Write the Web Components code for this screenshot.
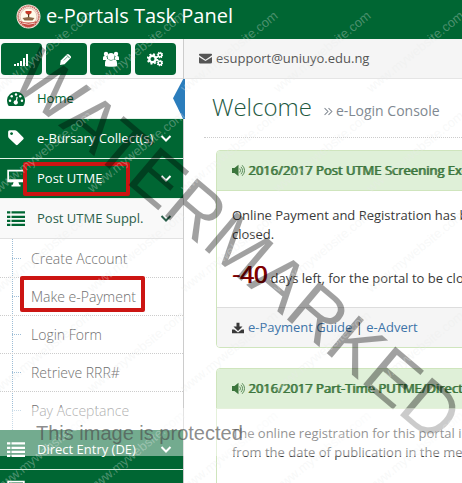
<!DOCTYPE html>
<html lang="en">
<head>
<meta charset="utf-8">
<title>e-Portals Task Panel</title>
<style>
:root{--green:#006633;--line:#e2e2e2}
html,body{margin:0;height:100%;overflow:hidden;background:#fff}
body{font:13px/19px "Open Sans","Noto Sans",sans-serif;color:#393939}
</style>
</head>
<body>
<portal-app></portal-app>
<script>
const ICONS={
signal:'<g fill="currentColor" stroke="none"><path d="M0 13h2v2H0zM3 12h2v3H3zM6 10h2v5H6zM9 7h2v8H9zM12 3h2v12h-2z"/></g>',
pencil:'<path d="M0 16l1-6 8-8c1-1 2-1 3 0l2 2c1 1 1 2 0 3l-8 8z" fill="currentColor"/><path d="M9 3l4 4" stroke="var(--green)"/><path d="M5 10l5-5" stroke="var(--green)" stroke-width=".7"/>',
users:'<g fill="currentColor"><circle cx="8" cy="5.500" r="3.500"/><circle cx="3" cy="3" r="2.200"/><circle cx="13" cy="3" r="2.200"/><path d="M0 9V7c0-2 1-2 3-2 1 0 1 3 2 4zM16 9V7c0-2-1-2-3-2-1 0-1 3-2 4zM2 15v-3c0-3 2-4 3-4 2 2 4 2 6 0 1 0 3 1 3 4v3c0 1-12 1-12 0z"/></g>',
cogs:'<g fill="none" stroke="currentColor"><circle cx="5.500" cy="8" r="3.200" stroke-width="2.400"/><circle cx="5.500" cy="8" r="4.700" stroke-width="2" stroke-dasharray="1.850 1.850"/><circle cx="13" cy="4" r="1.800" stroke-width="1.500"/><circle cx="13" cy="4" r="2.700" stroke-width="1.200" stroke-dasharray="1.060 1.060"/><circle cx="13" cy="12" r="1.800" stroke-width="1.500"/><circle cx="13" cy="12" r="2.700" stroke-width="1.200" stroke-dasharray="1.060 1.060"/></g>',
gauge:'<path d="M1.500 15A8 8 0 1 1 14.500 15Z" fill="currentColor"/><g fill="#fff"><circle cx="2.700" cy="10.500" r="1.100"/><circle cx="4.200" cy="6.500" r="1.100"/><circle cx="8" cy="4.800" r="1.100"/><circle cx="11.800" cy="6.500" r="1.100"/><circle cx="13.300" cy="10.500" r="1.100"/><circle cx="7.800" cy="12" r="1.900"/></g><path d="M8 12l1-5" stroke="#fff" stroke-width="1.100"/>',
tag:'<path fill="currentColor" fill-rule="evenodd" d="M1 2.500Q1 1 2.500 1H7q1 0 2 1l5.500 5.500q.8.800 0 1.600l-5 5q-.8.800-1.600 0L2 8.500Q1 7.500 1 6.500zM4 2.800a1.300 1.300 0 1 0 .1 0z"/>',
desktop:'<path d="M1 1.500h14v9.500H1z" fill="none" stroke="currentColor" stroke-width="1.500"/><path d="M1 9h14v2.500H1zM6 11h4l1 3.500H5zM4 14h8v1.500H4z" fill="currentColor"/>',
list:'<path fill="currentColor" d="M0 2h3v2H0zM4 2h12v2H4zM0 6h3v2H0zM4 6h12v2H4zM0 9.500h3v2H0zM4 9.500h12v2H4zM0 13h3v2H0zM4 13h12v2H4z"/>',
down:'<path d="M3.500 6l4.500 4.500L12.500 6" fill="none" stroke="currentColor" stroke-width="2"/>',
mail:'<path fill="currentColor" d="M0 3q0-1 1-1h14q1 0 1 1v1L8 9.500 0 4zM0 6l8 5 8-5v7q0 1-1 1H1q-1 0-1-1z"/>',
double:'<path d="M1 2l6 6-6 6M8 2l6 6-6 6" fill="none" stroke="currentColor" stroke-width="1.800"/>',
volume:'<path fill="currentColor" d="M0 5h3l5-4v14l-5-4H0z"/><path d="M9.500 5.500q2 2.500 0 5M11 3.500q4 4.500 0 9M12.500 1.500q6 6.500 0 13" fill="none" stroke="currentColor"/>',
download:'<path fill="currentColor" d="M6 1h4v5h4l-6 6-6-6h4zM0 10h3l5 4 5-4h3v5H0z"/>'
};
function define(name,html,after){
  const t=document.createElement('template');t.innerHTML=html;
  customElements.define(name,class extends HTMLElement{
    constructor(){super();this.attachShadow({mode:'open'}).append(t.content.cloneNode(true));}
    connectedCallback(){if(after)after(this,this.shadowRoot);}
  });
}
define('ui-icon','<style>:host{display:inline-block;width:var(--size,16px);height:var(--size,16px);flex:none}svg{display:block;width:100%;height:100%}</style><svg viewBox="0 0 16 16" aria-hidden="true"></svg>',
 (h,r)=>{r.querySelector('svg').innerHTML=ICONS[h.getAttribute('name')]||'';});

define('portal-header',`<style>
:host{display:flex;height:39px;background:var(--green);color:#fff;padding-left:16px;align-items:flex-start;gap:5px;box-sizing:border-box}
svg{width:25px;height:25px;margin-top:4px}
a{color:inherit;text-decoration:none;font-size:20px;line-height:31px;white-space:nowrap}
</style>
<svg viewBox="0 0 25 25" aria-hidden="true"><circle cx="12.500" cy="12.500" r="12" fill="#f6e9df"/><circle cx="12.500" cy="12.500" r="10.300" fill="none" stroke="#c4685d" stroke-width="1.800" stroke-dasharray="1.300 .7"/><circle cx="12.500" cy="12.500" r="8.300" fill="#fffbea" stroke="#d9a698" stroke-width=".6"/><path d="M9.500 7h6v2l-2 1.500h-2L9.500 9z" fill="#c73c28"/><path d="M12 10h1.200v5H12z" fill="#553a1d"/><path d="M6.500 14l6-1 6 1-2 2.500h-8z" fill="#8d6a48"/><path d="M4 17q8.500 3 17 0-3 6-8.500 6T4 17z" fill="#c5473f"/><path d="M6 19q6.500 2.500 13 0" fill="none" stroke="#f6e0d6" stroke-width=".9"/></svg>
<a href="#">e-Portals Task Panel</a>`);

define('quick-actions',`<style>
:host{display:grid;grid-template-columns:repeat(4,41px);justify-content:space-between;padding:4px 7px 4px 1px;height:40px;box-sizing:border-box;background:#fafafa;border-bottom:1px solid #ddd}
button{border:0;padding:0;border-radius:4px;background:var(--green);color:#fff;height:32px;display:grid;place-items:center}
.s{--size:12px}
</style>
<button aria-label="Statistics"><ui-icon name="signal"></ui-icon></button><button aria-label="Edit"><ui-icon class="s" name="pencil"></ui-icon></button><button aria-label="Users"><ui-icon name="users"></ui-icon></button><button aria-label="Settings"><ui-icon name="cogs"></ui-icon></button>`);

define('nav-item',`<style>
:host{display:block;position:relative;height:40px;box-sizing:border-box;border-bottom:1px solid #e4f3e8;background:var(--green);color:#fff}
:host([tone=plain]){background:#fff;color:var(--green)}
:host([tone=open]){background:#f9f9f9;color:#2b5f4b;border-color:var(--line)}
a{display:flex;align-items:center;height:38px;padding:0 9px 0 7px;color:inherit;text-decoration:none;white-space:nowrap}
.i{--size:18px}
:host([tone=open]) .i{color:var(--green)}
.label{flex:1;padding-left:12px}.arrow{--size:16px}
:host([tone=plain]) .arrow{display:none}
.current{display:none}
:host([tone=plain]) .current{display:block;position:absolute;right:-2px;top:0;width:12px;height:40px;background:#2b7dbc;clip-path:polygon(85% 0,100% 0,100% 100%,85% 100%,0 48%)}
.mark{display:none}
:host([marked]) .mark{display:block;position:absolute;left:23px;top:3px;width:107px;height:34px;box-sizing:border-box;border:4px solid #cc1512;border-radius:2px}
</style>
<a href="#"><ui-icon class="i"></ui-icon><span class="label"><slot></slot></span><ui-icon class="arrow" name="down"></ui-icon></a><i class="current"></i><i class="mark"></i>`,
(h,r)=>{const i=r.querySelector('.i');i.setAttribute('name',h.getAttribute('icon'));i.connectedCallback();});

define('sub-item',`<style>
:host{display:block;position:relative;height:38px;box-sizing:border-box;border-bottom:1px dotted #ccc;color:#707070}
:host(:last-child){border-bottom-color:transparent}
a{display:flex;align-items:center;height:37px;color:inherit;text-decoration:none;white-space:nowrap;font-size:14px;font-weight:300}
a::before{content:"";width:9px;border-top:1px dotted #9dbdd6;margin:0 10px 0 12px}
.mark{display:none}
:host([marked]) .mark{display:block;position:absolute;left:20px;top:-2px;width:125px;height:36px;box-sizing:border-box;border:4px solid #cc1512;border-radius:2px}
</style><a href="#"><slot></slot></a><i class="mark"></i>`);

define('side-nav',`<style>
:host{display:block;border-right:1px solid #ccc;background:#fff}
.sub{display:block;position:relative;background:#fff;padding-top:1px}
.sub::before{content:"";position:absolute;left:12px;top:0;bottom:0;border-left:1px dotted #9dbdd6}
</style>
<quick-actions></quick-actions>
<nav>
<nav-item tone="plain" icon="gauge">Home</nav-item>
<nav-item icon="tag">e-Bursary Collect(s)</nav-item>
<nav-item icon="desktop" marked>Post UTME</nav-item>
<nav-item tone="open" icon="list">Post UTME Suppl.</nav-item>
<div class="sub"><sub-item>Create Account</sub-item><sub-item marked>Make e-Payment</sub-item><sub-item>Login Form</sub-item><sub-item>Retrieve RRR#</sub-item><sub-item>Pay Acceptance</sub-item></div>
<nav-item icon="list">Direct Entry (DE)</nav-item>
<nav-item icon="desktop"></nav-item>
</nav>`);

define('notice-panel',`<style>
:host{display:block;border:1px solid #cfe5bd;border-radius:4px;margin:0 -24px 20px 0;white-space:nowrap;overflow:hidden;background:#fff}
h2{margin:0;display:flex;align-items:center;gap:3px;height:40px;box-sizing:border-box;padding-left:15px;background:#dff0d8;border-bottom:1px solid #cfe5bd;color:#3c763d;font-size:13px;font-weight:400;text-shadow:1px 0 currentColor}
h2 ui-icon{--size:13px}
.body{padding:15px 15px 13px}
footer{height:39px;display:flex;align-items:center;gap:4px;padding-left:15px;background:#f5f5f5;border-top:1px solid #ddd}
footer ui-icon{--size:12px}
:host(:not([links])) footer{display:none}
</style>
<h2><ui-icon name="volume"></ui-icon><slot name="title"></slot></h2><div class="body"><slot></slot></div><footer><ui-icon name="download"></ui-icon><slot name="links"></slot></footer>`);

define('portal-main',`<style>
:host{display:block;min-width:0;overflow:hidden}
.crumb{height:40px;box-sizing:border-box;background:#f5f5f5;border-bottom:1px solid #e5e5e5;display:flex;align-items:center;gap:4px;padding-left:15px;color:#555;white-space:nowrap}
.crumb ui-icon{--size:13px}
.crumb a{color:inherit;text-decoration:none}
.head{display:flex;align-items:baseline;gap:12px;margin:0 0 12px 20px;padding:8px 0 0 8px;height:59px;box-sizing:border-box;border-bottom:1px dotted #ccc;white-space:nowrap}
h1{margin:0;font-size:24px;line-height:40px;font-weight:300;color:#22583f}
.head p{margin:0;font-size:14px;color:#808891}
.head ui-icon{--size:9px;margin-right:3px}
.list{padding-left:32px}
p{margin:0}
.count{margin-top:14px;line-height:32px}
b{font-size:24px;font-weight:400;color:#800000;text-shadow:1px 0 #800000}
.links a{color:#3d74a8;text-decoration:none}
</style>
<div class="crumb"><ui-icon name="mail"></ui-icon><a href="mailto:esupport@uniuyo.edu.ng">esupport@uniuyo.edu.ng</a></div>
<header class="head"><h1>Welcome</h1><p><ui-icon name="double"></ui-icon>e-Login Console</p></header>
<div class="list">
<notice-panel links><span slot="title">2016/2017 Post UTME Screening Exe</span><p>Online Payment and Registration has b<br>closed.</p><p class="count"><b>-40</b> days left, for the portal to be clo</p><span slot="links" class="links"><a href="#">e-Payment Guide</a> | <a href="#">e-Advert</a></span></notice-panel>
<notice-panel><span slot="title">2016/2017 Part-Time PUTME/Direct</span><p>The online registration for this portal i<br>from the date of publication in the me</p><p class="count"><b>-11</b></p></notice-panel>
</div>`);

define('water-mark',`<style>
:host{position:absolute;z-index:2;inset:0;overflow:hidden;pointer-events:none;font-family:"Liberation Sans",Arial,sans-serif}
svg{position:absolute;inset:0;width:100%;height:100%}
.band{position:absolute;left:0;right:0;top:408px;height:48px;box-sizing:border-box;padding:14px 0 0 36px;background:rgba(255,255,255,.45);color:rgba(75,75,75,.65);font-size:20px;line-height:22px;white-space:nowrap}
</style>
<svg aria-hidden="true"><text transform="translate(8 83) rotate(40.300)" font-size="72" fill="#000" fill-opacity=".37">WATERMARKED</text></svg>
<svg aria-hidden="true"><g class="tiles" font-size="13" fill="#e9ebea" fill-opacity=".33"></g></svg>
<div class="band">This image is protected</div>`,
(h,r)=>{let s='';for(let y=0;y<6;y++)for(let x=-1;x<5;x++)s+='<text transform="translate('+(x*93-1)+' '+(y*100-7)+') rotate(-39)">www.mywebsite.com</text>';r.querySelector('.tiles').innerHTML=s;});

define('portal-app',`<style>
:host{display:block;position:relative;height:100vh;overflow:hidden}
.columns{display:grid;grid-template-columns:184px minmax(0,1fr)}
side-nav{position:relative;z-index:1}
</style>
<portal-header></portal-header><div class="columns"><side-nav></side-nav><portal-main></portal-main></div><water-mark></water-mark>`);
</script>
</body>
</html>
